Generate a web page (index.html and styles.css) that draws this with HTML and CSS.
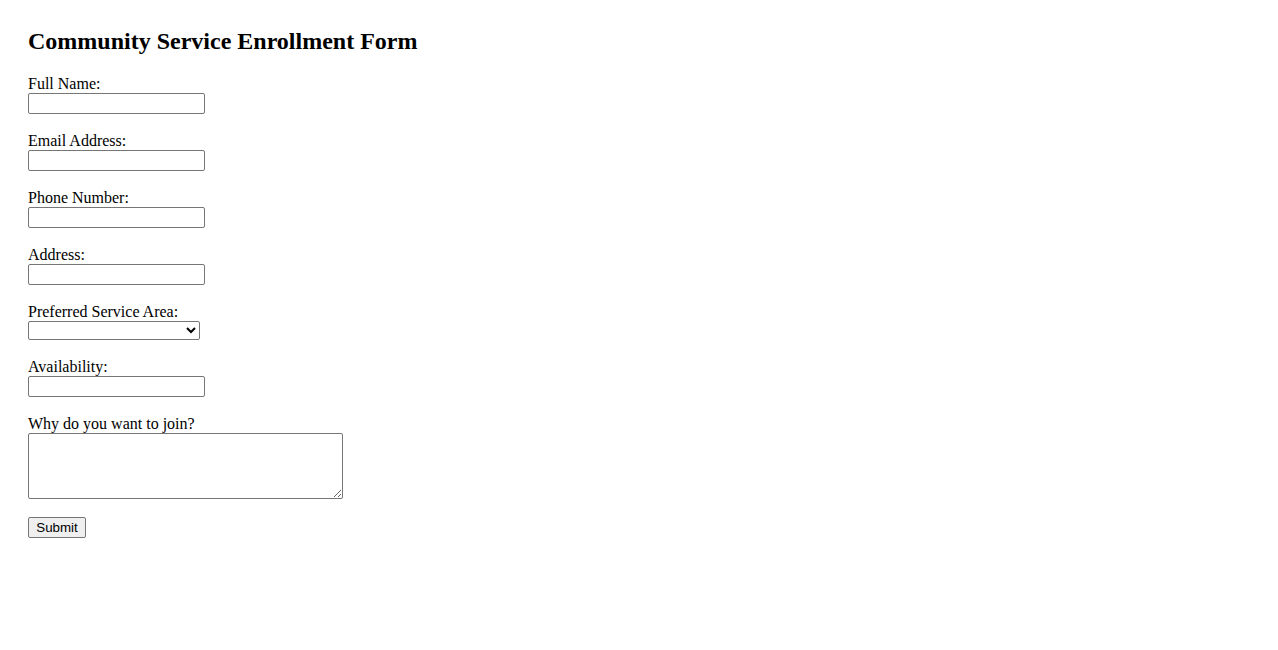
FILE: index.html
```html
<!DOCTYPE html>
<html lang="en">
<head>
<meta charset="utf-8">
<title>Community Service Enrollment Form</title>
<link rel="stylesheet" href="styles.css">
</head>
<body>
<main class="page">
  <h2 class="title">Community Service Enrollment Form</h2>
  <form class="form">
    <div class="field">
      <label class="label" for="name">Full Name:</label>
      <input class="text" type="text" id="name" name="name">
    </div>
    <div class="field">
      <label class="label" for="email">Email Address:</label>
      <input class="text" type="email" id="email" name="email">
    </div>
    <div class="field">
      <label class="label" for="phone">Phone Number:</label>
      <input class="text" type="tel" id="phone" name="phone">
    </div>
    <div class="field">
      <label class="label" for="address">Address:</label>
      <input class="text" type="text" id="address" name="address">
    </div>
    <div class="field">
      <label class="label" for="area">Preferred Service Area:</label>
      <select class="select" id="area" name="area"></select>
    </div>
    <div class="field">
      <label class="label" for="availability">Availability:</label>
      <input class="text" type="text" id="availability" name="availability">
    </div>
    <div class="field">
      <label class="label" for="why">Why do you want to join?</label>
      <textarea class="area" id="why" name="why" rows="4" cols="40"></textarea>
    </div>
    <div class="field">
      <button class="submit" type="submit">Submit</button>
    </div>
  </form>
</main>
</body>
</html>
```

FILE: styles.css
```css
html, body {
  margin: 0;
  background: #ffffff;
  color: #000000;
}

.page {
  padding: 28px 28px 0 28px;
  font-family: "Liberation Serif", "Times New Roman", serif;
  font-size: 16px;
}

.title {
  margin: 0 0 20px 0;
  font-size: 24px;
  line-height: 27px;
  font-weight: bold;
}

.form {
  display: flex;
  flex-direction: column;
  align-items: flex-start;
}

.field {
  display: flex;
  flex-direction: column;
  align-items: flex-start;
  margin-bottom: 18px;
}

.label {
  display: block;
  height: 18px;
  line-height: 18px;
}

.text {
  box-sizing: border-box;
  width: 177px;
  height: 21px;
  margin: 0;
  padding: 1px 2px;
  border: 1px solid #767676;
  border-radius: 2px;
  font-family: "Liberation Sans", Arial, sans-serif;
  font-size: 13.333px;
  background: #ffffff;
}

.select {
  box-sizing: border-box;
  width: 172px;
  height: 19px;
  margin: 0;
  border: 1px solid #767676;
  border-radius: 2px;
  font-family: "Liberation Sans", Arial, sans-serif;
  font-size: 13.333px;
  background: #ffffff;
}

.area {
  box-sizing: border-box;
  width: 315px;
  height: 66px;
  margin: 0;
  padding: 2px;
  border: 1px solid #767676;
  border-radius: 2px;
  font-family: "Liberation Mono", "Courier New", monospace;
  font-size: 13.333px;
  background: #ffffff;
}

.submit {
  box-sizing: border-box;
  width: 58px;
  height: 21px;
  margin: 0;
  padding: 1px 6px;
  border: 1px solid #767676;
  border-radius: 2px;
  background: #efefef;
  font-family: "Liberation Sans", Arial, sans-serif;
  font-size: 13.333px;
  color: #000000;
}
```
